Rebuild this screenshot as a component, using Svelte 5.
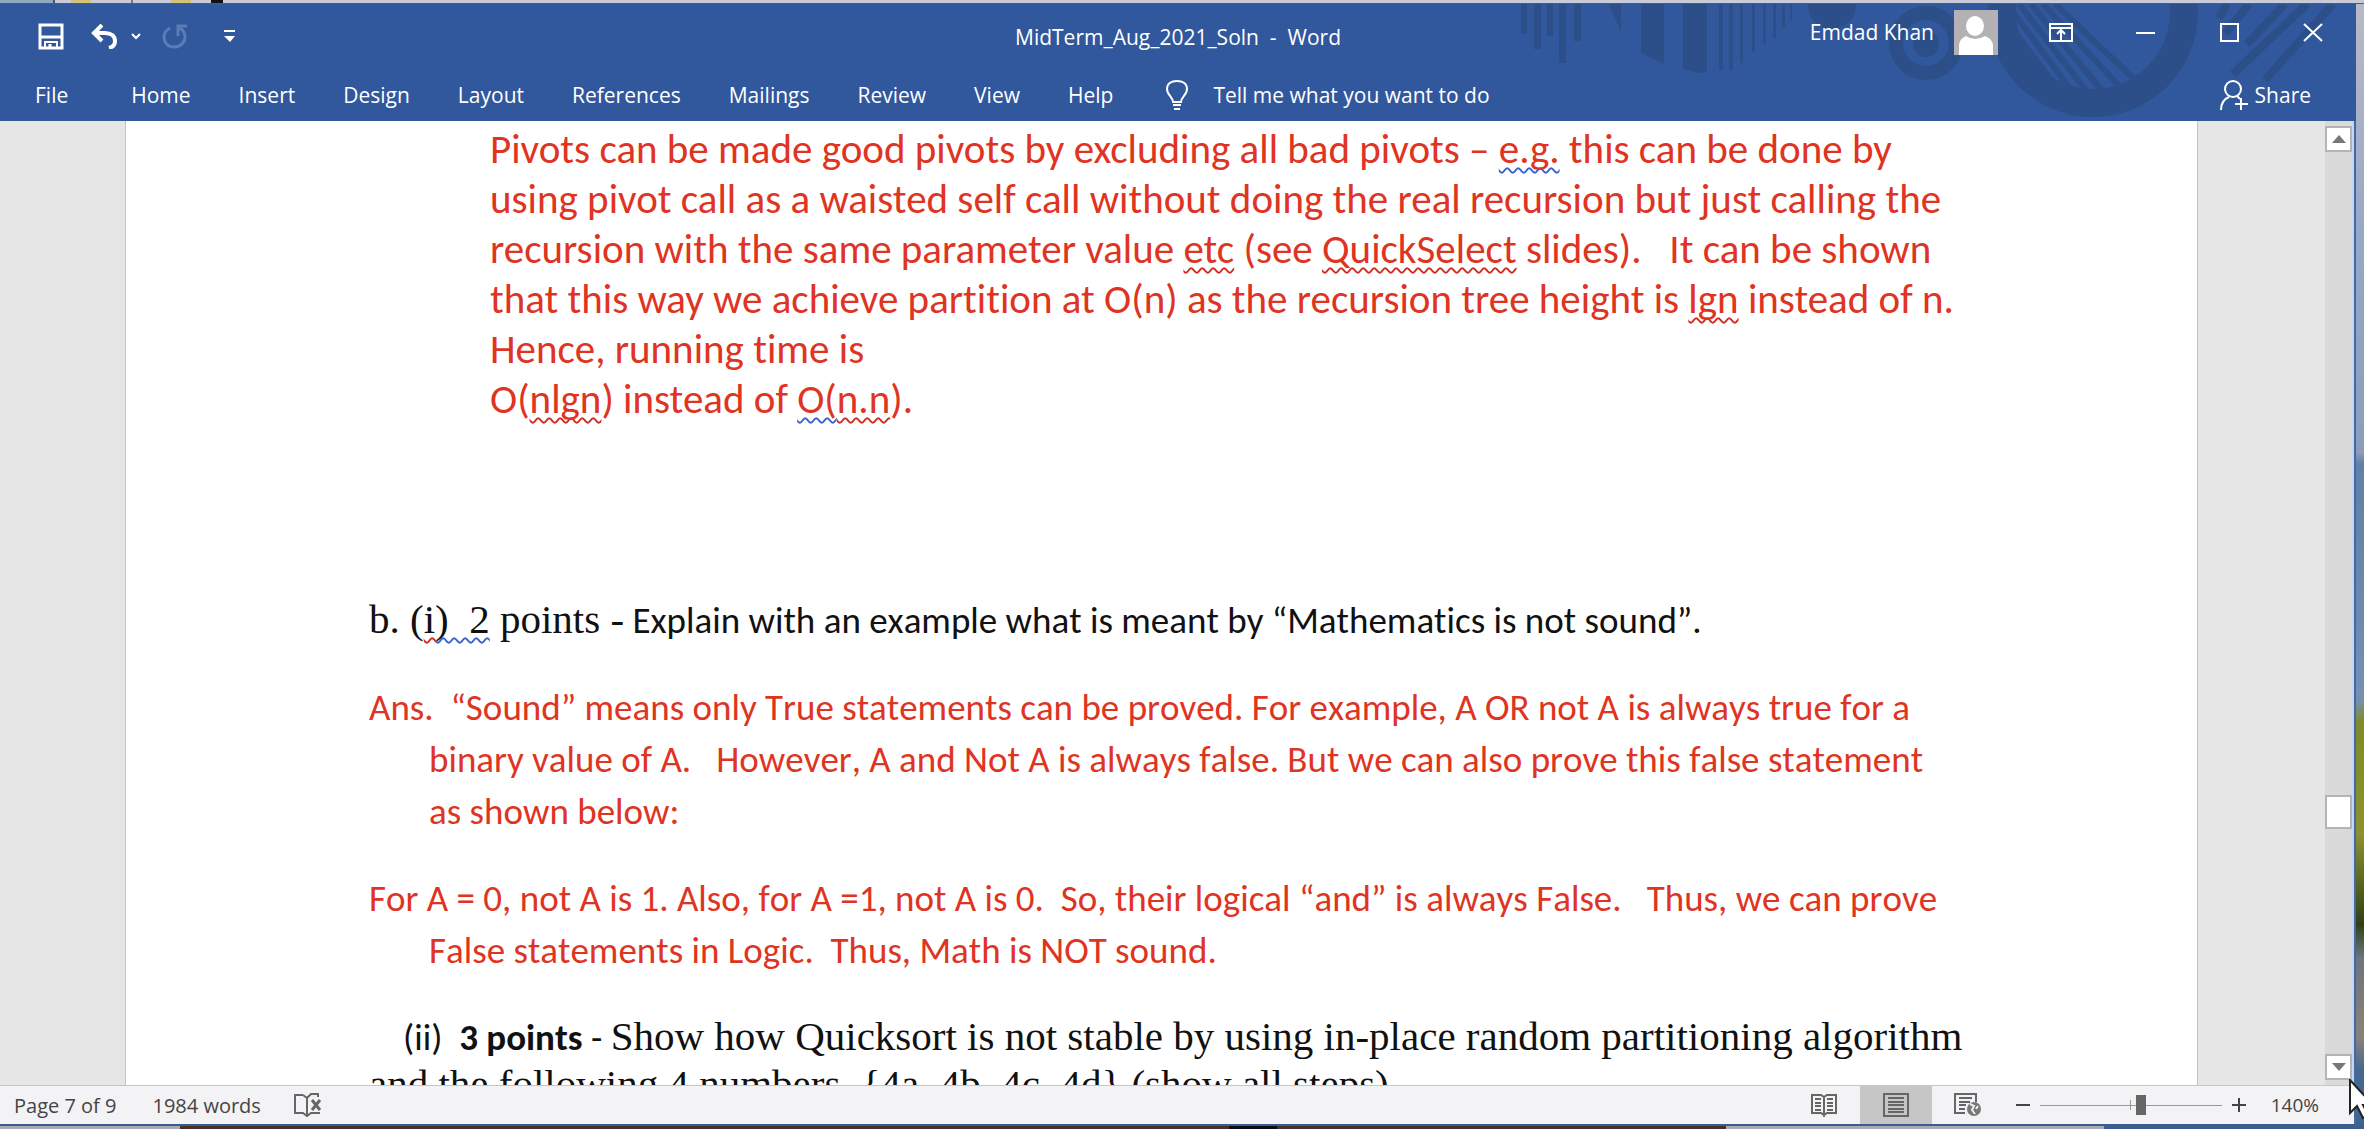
<script>
  const tabs = ['Home', 'Insert', 'Design', 'Layout', 'References', 'Mailings', 'Review', 'View', 'Help'];
  let zoom = $state(140);
</script>

{#snippet miss(text)}<span class="spelling">{text}</span>{/snippet}
{#snippet gram(text)}<span class="grammar">{text}</span>{/snippet}

<div class="desktop">
  <div class="behind-top"><i class="b1"></i><i class="b2"></i><i class="b3"></i><i class="b4"></i><i class="b5"></i></div>
  <div class="middle">
    <div class="window">
      <header>
        <svg class="pattern" viewBox="1500 4 855 117" aria-hidden="true">
          <g fill="#2c4f89">
            <path d="M1520 4h6v30h-6zM1533 4h7v45h-7zM1546 4h6v32h-6zM1558 4h7v59h-7zM1573 4h7v37h-7zM1608 4h12v28zM1640 4h23v60l-23-11zM1682 4h24v68l-8 1-16-4zM1718 4h4v66h-4zM1728 4h4v66h-4zM1739 4h3v59h-3zM1751 4h3v48h-3zM1762 4h3v40h-3zM1772 4h3v34h-3zM1781 4h3v24h-3zM1789 4h2v16h-2z" />
            <circle cx="1831" cy="5" r="24" />
            <circle cx="1925" cy="44" r="13" />
          </g>
          <g fill="none" stroke="#2c4f89">
            <circle cx="1925" cy="43" r="30" stroke-width="14" />
            <circle cx="2092" cy="12" r="91" stroke-width="28" />
            <path stroke-width="6" d="M2006 22L2050 80M2006 4L2070 90M2018 4L2086 92M2030 4L2102 92M2042 4L2118 86M2054 4L2132 78" />
            <path stroke-width="8" d="M2226 4L2218 18M2248 4L2224 34M2284 4L2246 44M2306 4L2232 74M2332 4L2264 80" />
          </g>
        </svg>
        <div class="titlebar">
          <div class="quick">
            <button class="save" aria-label="Save">
              <svg width="26" height="27" viewBox="0 0 26 27" fill="none" stroke="#fff" stroke-width="3"><path d="M2 2h22v23H2z" /><path d="M3 14h20" /><path stroke-width="2" d="M7 26v-7h12v7" /><path d="M12 26v-5" /></svg>
            </button>
            <button class="undo" aria-label="Undo">
              <svg width="28" height="25" viewBox="0 0 28 25" fill="none" stroke="#fff" stroke-width="4"><path d="M12 1L4 9l8 8M4 9h11c6 0 10 3 10 8 0 3-2 6-6 7" /></svg>
            </button>
            <button class="undo-more" aria-label="Undo history">
              <svg width="10" height="7" viewBox="0 0 10 7" fill="none" stroke="#fff" stroke-width="2"><path d="M1 1l4 4 4-4" /></svg>
            </button>
            <button class="redo" aria-label="Repeat">
              <svg width="26" height="25" viewBox="0 0 26 25" fill="none" stroke="#5d7bb5" stroke-width="3"><path d="M8 4C4 6 2 9 2 13c0 6 4 10 10 10s11-4 11-10c0-4-2-7-5-9M16 12V2h9" /></svg>
            </button>
            <button class="customize" aria-label="Customize Quick Access Toolbar">
              <svg width="11" height="13" viewBox="0 0 11 13" fill="#fff"><path d="M0 0h11v2H0zM0 6h11l-5 6z" /></svg>
            </button>
          </div>
          <h1>MidTerm_Aug_2021_Soln&nbsp; -&nbsp; Word</h1>
          <div class="account">
            <span>Emdad Khan</span>
            <svg class="avatar" width="44" height="45" viewBox="0 0 44 45"><path fill="#b3b1b3" d="M0 0h44v45H0z" /><ellipse cx="21" cy="16" rx="9" ry="10" fill="#fff" /><path fill="#fff" d="M5 45V36q0-7 7-10 9 6 19 0 8 3 8 10v9z" /></svg>
            <button aria-label="Ribbon display options">
              <svg width="24" height="19" viewBox="0 0 24 19" fill="none" stroke="#fff" stroke-width="2"><path d="M1 1h22v17H1zM1 5h22M12 17V8M8 11l4-4 4 4" /></svg>
            </button>
            <button class="min" aria-label="Minimize">
              <svg width="19" height="19" viewBox="0 0 19 19"><path fill="#fff" d="M0 9h19v2H0z" /></svg>
            </button>
            <button class="max" aria-label="Maximize">
              <svg width="19" height="19" viewBox="0 0 19 19" fill="none" stroke="#fff" stroke-width="2"><path d="M1 1h17v17H1z" /></svg>
            </button>
            <button class="close" aria-label="Close">
              <svg width="20" height="19" viewBox="0 0 20 19" fill="none" stroke="#fff" stroke-width="2"><path d="M1 1l18 17M19 1L1 18" /></svg>
            </button>
          </div>
        </div>
        <nav>
          <button class="file">File</button>
          {#each tabs as tab}<button>{tab}</button>{/each}
          <button class="tell">
            <svg width="22" height="30" viewBox="0 0 22 30" fill="none" stroke="#fff" stroke-width="2"><path d="M7 22c0-5-6-7-6-13 0-5 4-8 10-8s10 3 10 8c0 6-6 8-6 13zM7 25h8M8 29h6" /></svg>
            Tell me what you want to do
          </button>
          <button class="share">
            <svg width="29" height="30" viewBox="0 0 29 30" fill="none" stroke="#fff" stroke-width="2"><ellipse cx="13" cy="9" rx="8" ry="8" /><path d="M1 30c0-7 3-11 8-13M17 16l3 3M21 18v12M15 24h13" /></svg>
            Share
          </button>
        </nav>
      </header>

      <div class="body">
        <main>
          <p class="pivots">
            <span class="line">Pivots can be made good pivots by excluding all bad pivots – {@render gram('e.g.')} this can be done by</span>
            <span class="line">using pivot call as a waisted self call without doing the real recursion but just calling the</span>
            <span class="line">recursion with the same parameter value {@render miss('etc')} (see {@render miss('QuickSelect')} slides).&nbsp;&nbsp; It can be shown</span>
            <span class="line">that this way we achieve partition at O(n) as the recursion tree height is {@render miss('lgn')} instead of n.</span>
            <span class="line">Hence, running time is</span>
            <span class="line">O({@render miss('nlgn')}) instead of {@render gram('O(')}{@render miss('n.n')}).</span>
          </p>
          <p class="question"><span class="serif">b. ({@render miss('i')}{@render gram(')\u00a0 2')} points -</span> Explain with an example what is meant by “Mathematics is not sound”.</p>
          <p class="answer">
            <span class="line">Ans.&nbsp; “Sound” means only True statements can be proved. For example, A OR not A is always true for a</span>
            <span class="line">binary value of A.&nbsp;&nbsp; However, A and Not A is always false. But we can also prove this false statement</span>
            <span class="line">as shown below:</span>
          </p>
          <p class="answer">
            <span class="line">For A = 0, not A is 1. Also, for A =1, not A is 0.&nbsp; So, their logical “and” is always False.&nbsp;&nbsp; Thus, we can prove</span>
            <span class="line">False statements in Logic.&nbsp; Thus, Math is NOT sound.</span>
          </p>
          <p class="next">
            <span class="line first">(ii)&nbsp; <b>3 points</b> - <span class="serif">Show how Quicksort is not stable by using in-place random partitioning algorithm</span></span>
            <span class="line"><span class="serif">and the following 4 numbers. {'{4a, 4b, 4c, 4d}'} (show all steps)</span></span>
          </p>
        </main>
        <div class="scrollbar">
          <button aria-label="Scroll up"><svg width="14" height="8" viewBox="0 0 14 8"><path fill="#777" d="M0 8l7-8 7 8z" /></svg></button>
          <div class="rail"><div class="thumb"></div></div>
          <button aria-label="Scroll down"><svg width="14" height="8" viewBox="0 0 14 8"><path fill="#777" d="M0 0h14L7 8z" /></svg></button>
        </div>
      </div>

      <footer>
        <span class="pages">Page 7 of 9</span>
        <span class="words">1984 words</span>
        <button class="proof" aria-label="Proofing errors">
          <svg width="28" height="24" viewBox="0 0 28 24" fill="none" stroke="#666" stroke-width="2"><path d="M9 2H1v18h8l4 3 4-3h8v-1M9 2l4 3v18M13 5l4-4h7v3" /><path stroke-width="3" d="M18 7l8 10M26 7l-8 10" /></svg>
        </button>
        <div class="views">
          <button aria-label="Read mode">
            <svg width="26" height="24" viewBox="0 0 26 24" fill="none" stroke="#666" stroke-width="2"><path d="M10 2H1v18h9l3 2 3-2h9V2h-9l-3 2zM13 3v21M4 6h6M4 10h6M4 13h6M4 17h6M16 6h6M16 10h6M16 13h6M16 17h6" /></svg>
          </button>
          <button class="on" aria-label="Print layout">
            <svg width="26" height="24" viewBox="0 0 26 24" fill="none" stroke="#666" stroke-width="2"><path d="M1 1h24v22H1zM5 5h16M5 9h16M5 12h16M5 16h16M5 19h16" /></svg>
          </button>
          <button aria-label="Web layout">
            <svg width="28" height="24" viewBox="0 0 28 24" fill="none" stroke="#666" stroke-width="2"><path d="M22 9V1H1v19h10M5 5h13M5 9h11M5 12h7M5 16h6" /><circle cx="20" cy="16" r="7" fill="#777" stroke="none" /><path stroke="#eee" d="M16 11l4 2-2 4 3 4M24 13l-2 3" /></svg>
          </button>
        </div>
        <div class="zoom">
          <button aria-label="Zoom out"><svg width="14" height="14" viewBox="0 0 14 14"><path fill="#444" d="M0 6h14v2H0z" /></svg></button>
          <input type="range" min="10" max="243" bind:value={zoom} aria-label="Zoom level" />
          <button aria-label="Zoom in"><svg width="14" height="14" viewBox="0 0 14 14"><path fill="#444" d="M0 6h14v2H0zM6 0h2v14H6z" /></svg></button>
          <span>{zoom}%</span>
        </div>
      </footer>
    </div>
    <div class="behind-right"></div>
  </div>
  <div class="behind-bottom"></div>
  <svg class="cursor" width="15" height="44" viewBox="0 0 15 44" aria-hidden="true"><path d="M1 1v33l7-7 6 12 5-3-5-10h10z" fill="#fff" stroke="#222" stroke-width="2" /></svg>
</div>

<style>
  :global(body) { margin: 0; }
  .desktop {
    position: relative;
    height: 100vh;
    display: flex;
    flex-direction: column;
    overflow: hidden;
    font-family: 'Open Sans', 'Noto Sans', sans-serif;
    font-size: 21px;
  }
  button {
    border: 0;
    padding: 0;
    margin: 0;
    background: none;
    color: inherit;
    font: inherit;
    display: flex;
    align-items: center;
    justify-content: center;
    white-space: nowrap;
  }
  svg { display: block; flex: none; }
  h1, p { margin: 0; font-weight: 400; }

  .behind-top { height: 4px; flex: none; display: flex; background: #c9cbd8; border-bottom: 1px solid #4c5c80; box-sizing: border-box; }
  .behind-top i { height: 3px; }
  .b1 { width: 53px; background: #8fa9c4; border-right: 2px solid #555; }
  .b2 { width: 20px; margin-left: 16px; background: #d2c179; }
  .b3 { width: 2px; margin-left: 40px; background: #777; }
  .b4 { width: 20px; margin-left: 38px; background: #d2c179; }
  .b5 { width: 12px; margin-left: 20px; background: #111; }
  .middle { flex: 1; min-height: 0; display: flex; }
  .behind-right {
    width: 8px;
    background: linear-gradient(#b9b9c6 0%, #98a8c8 20%, #8b9cbd 40%, #5f80a8 41%, #7490b5 62%, #7f8b28 64%, #8c9130 74%, #2f4018 82%, #6c7480 85%, #8a8279 92%, #47698f 95%, #3d6491 100%);
  }
  .behind-bottom {
    height: 3px;
    flex: none;
    background: linear-gradient(90deg, #aaaab4 0 180px, #46302a 180px 52%, #0c0c14 52% 54%, #46302a 54% 73%, #aaaab4 73% 89%, #3d5f8c 89%);
  }
  .window {
    flex: 1;
    min-width: 0;
    display: flex;
    flex-direction: column;
    border-right: 2px solid #44699f;
    border-bottom: 2px solid #385c96;
  }

  header { position: relative; height: 117px; flex: none; background: #31579c; color: #fff; display: flex; flex-direction: column; margin-right: -2px; }
  .pattern { position: absolute; right: 0; top: 0; width: 855px; height: 117px; }
  .titlebar { position: relative; height: 60px; display: grid; grid-template-columns: 1fr auto 1fr; align-items: start; }
  .quick { display: flex; align-items: center; height: 64px; padding-left: 38px; }
  .undo { margin-left: 26px; }
  .undo-more { margin-left: 13px; }
  .redo { margin-left: 21px; }
  .customize { margin-left: 36px; }
  h1 { font-size: 21px; line-height: 28px; padding-top: 19px; }
  .account { display: flex; align-items: center; justify-content: flex-end; height: 56px; padding-right: 33px; }
  .avatar { margin: 0 51px 0 20px; }
  .min { margin-left: 63px; }
  .max { margin-left: 65px; }
  .close { margin-left: 64px; }
  nav { position: relative; flex: 1; display: flex; align-items: center; gap: 48px; padding: 4px 45px 0 35px; }
  .file { margin-right: 15px; }
  .tell { margin-left: 5px; gap: 25px; }
  .share { margin-left: auto; gap: 6px; }

  .body { flex: 1; min-height: 0; display: flex; background: #e6e6e6; border-right: 2px solid #c5d7f1; }
  main {
    flex: 1;
    min-width: 0;
    box-sizing: border-box;
    margin: 0 127px 0 125px;
    padding: 3px 0 0 243px;
    background: #fff;
    border: solid #c3c3c3;
    border-width: 0 1px;
    overflow: hidden;
    font-family: Carlito, Calibri, Lato, sans-serif;
    font-variant-ligatures: none;
    font-kerning: none;
    color: #111;
  }
  p { white-space: nowrap; }
  .line { display: block; }
  .pivots { padding-left: 121px; font-size: 41px; line-height: 50px; font-kerning: normal; color: #e03423; }
  .question { margin-top: 171px; font-size: 37px; line-height: 52px; }
  .answer { padding-left: 60px; margin-top: 35px; font-size: 37px; line-height: 52px; color: #e03423; }
  .answer .line:first-child { margin-left: -60px; }
  .next { margin-top: 37px; font-size: 37px; line-height: 48px; }
  .first { padding-left: 34px; }
  .serif { font-family: 'Liberation Serif', 'Times New Roman', serif; font-size: 41px; line-height: 40px; }
  .spelling, .grammar { text-decoration: underline wavy #d02b20 2px; text-underline-offset: 4px; text-decoration-skip-ink: none; }
  .grammar { text-decoration-color: #3a62cc; }

  .scrollbar { width: 27px; background: #dadada; display: flex; flex-direction: column; padding: 5px 0; }
  .scrollbar button { box-sizing: border-box; height: 26px; border: 2px solid #b4b4b4; background: #fff; }
  .rail { flex: 1; display: flex; flex-direction: column; }
  .rail::before { content: ''; flex: 643; }
  .rail::after { content: ''; flex: 225; }
  .thumb { height: 34px; box-sizing: border-box; border: 2px solid #b4b4b4; background: #fff; }

  footer { height: 38px; flex: none; display: flex; align-items: center; background: #f3f3f5; border-top: 1px solid #c6c6c6; color: #444; font-size: 20px; padding: 0 35px 0 14px; }
  .words { margin-left: 36px; }
  .proof { margin-left: 33px; }
  .views { margin-left: auto; display: flex; align-self: stretch; }
  .views button { width: 72px; }
  .on { background: #c6c6c6; }
  .zoom { display: flex; align-items: center; margin-left: 12px; font-size: 19px; }
  .zoom input { appearance: none; width: 182px; height: 20px; margin: 0 10px; background: linear-gradient(#999, #999) 0 50% / 100% 1px no-repeat, linear-gradient(#999, #999) 50% 50% / 1px 10px no-repeat; }
  .zoom input::-webkit-slider-thumb { appearance: none; width: 10px; height: 20px; background: #666; }
  .zoom span { margin-left: 25px; }
  .cursor { position: absolute; right: 0; bottom: 6px; }
</style>
